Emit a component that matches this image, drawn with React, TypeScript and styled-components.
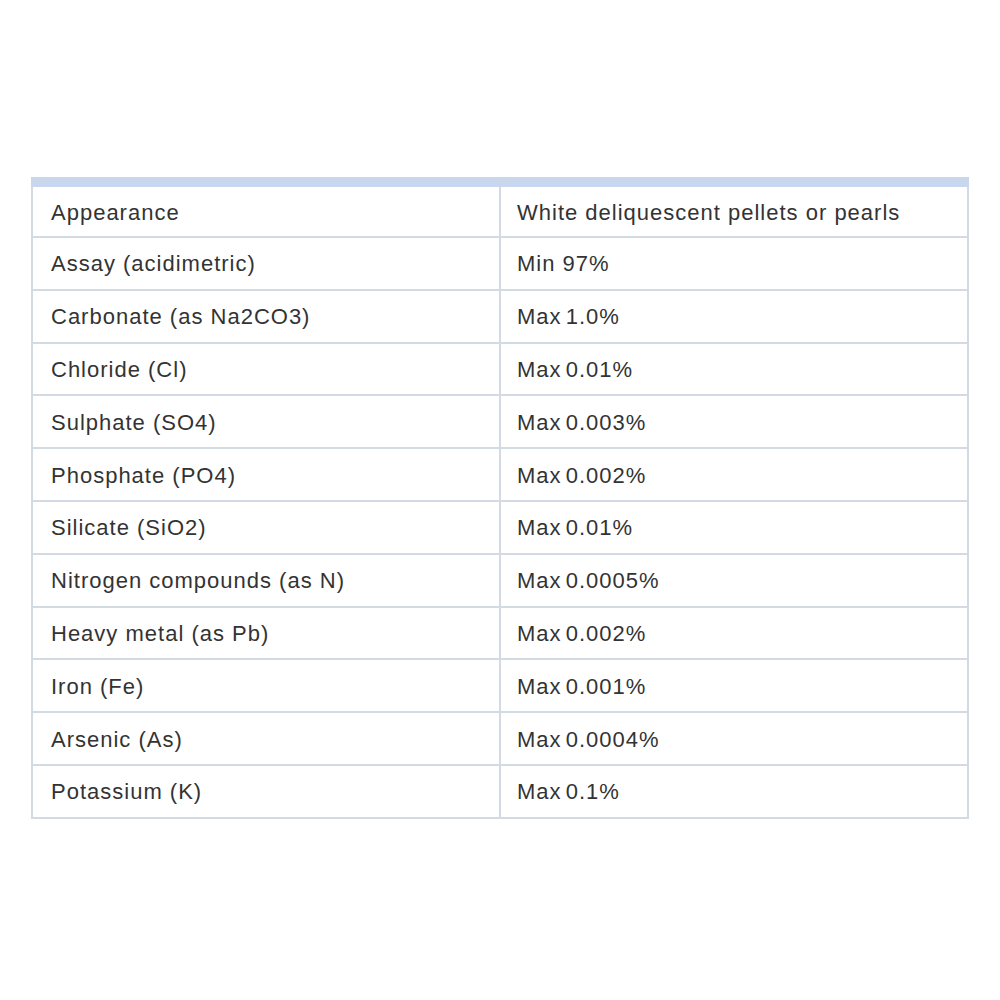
import React from "react";
import styled, { createGlobalStyle } from "styled-components";

const Global = createGlobalStyle`
  html, body { margin: 0; padding: 0; background: #ffffff; }
  body { font-family: "Liberation Sans", Arial, sans-serif; }
`;

const Page = styled.div`
  width: 1000px;
  height: 1000px;
  padding-top: 177px;
  padding-left: 31px;
  box-sizing: border-box;
`;

const Table = styled.table`
  width: 938px;
  border-collapse: collapse;
  border-top: 10px solid #c9d7ee;
  table-layout: fixed;
`;

const Row = styled.tr<{ $first?: boolean }>`
  height: ${(p) => (p.$first ? "55px" : "52.8px")};
`;

const Cell = styled.td<{ $right?: boolean; $tight?: boolean }>`
  border: 2px solid #d3dae3;
  padding: 2px 0 0 ${(p) => (p.$right ? "16px" : "18px")};
  font-size: 22px;
  color: #333333;
  vertical-align: middle;
  width: ${(p) => (p.$right ? "auto" : "468px")};
  box-sizing: border-box;
  white-space: nowrap;
  letter-spacing: 1px;
  word-spacing: ${(p) => (p.$tight ? "-3px" : "0")};
`;

const rows: [string, string][] = [
  ["Appearance", "White deliquescent pellets or pearls"],
  ["Assay (acidimetric)", "Min 97%"],
  ["Carbonate (as Na2CO3)", "Max 1.0%"],
  ["Chloride (Cl)", "Max 0.01%"],
  ["Sulphate (SO4)", "Max 0.003%"],
  ["Phosphate (PO4)", "Max 0.002%"],
  ["Silicate (SiO2)", "Max 0.01%"],
  ["Nitrogen compounds (as N)", "Max 0.0005%"],
  ["Heavy metal (as Pb)", "Max 0.002%"],
  ["Iron (Fe)", "Max 0.001%"],
  ["Arsenic (As)", "Max 0.0004%"],
  ["Potassium (K)", "Max 0.1%"],
];

export default function App() {
  return (
    <>
      <Global />
      <Page>
        <Table>
          <tbody>
            {rows.map(([k, v], i) => (
              <Row key={k} $first={i === 0}>
                <Cell>{k}</Cell>
                <Cell $right $tight={v.startsWith("Max")}>
                  {v}
                </Cell>
              </Row>
            ))}
          </tbody>
        </Table>
      </Page>
    </>
  );
}
